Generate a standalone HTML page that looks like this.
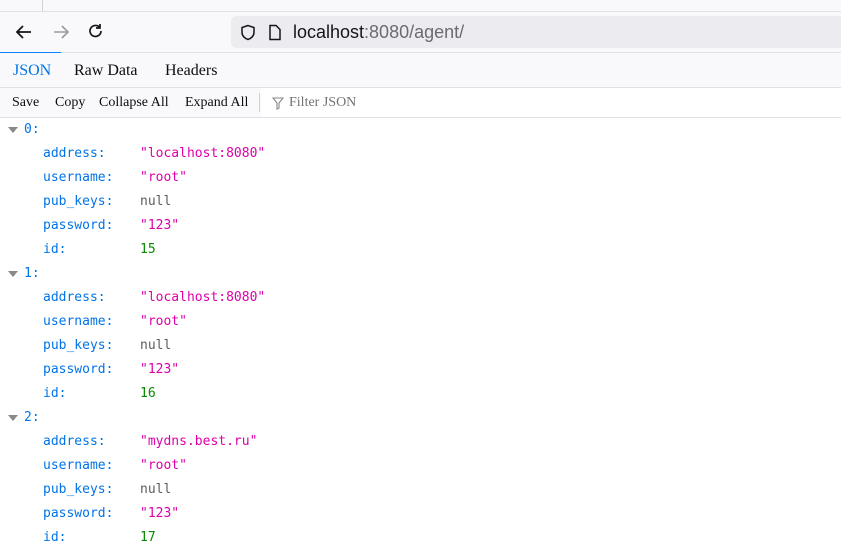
<!DOCTYPE html>
<html><head><style>
body{margin:0;width:841px;height:550px;overflow:hidden;background:#fff;font-family:"Liberation Serif",serif;position:relative}
.top{position:absolute;left:0;top:0;width:841px;height:11px;background:#f9f9fb;border-bottom:1px solid #e0e0e6}
.top i{position:absolute;left:42px;top:0;width:1px;height:11px;background:#d0d0d7}
.nav{position:absolute;top:12px;left:0;width:841px;height:40px;background:#f9f9fb;border-bottom:1px solid #e0e0e6}
.url{position:absolute;left:231px;top:4px;width:620px;height:32px;background:#ececf0;border-radius:5px}
.url span{position:absolute;left:62px;top:6px;font-family:"Liberation Sans",sans-serif;font-size:18px;color:#15141a}
.url span b{font-weight:normal;color:#6a6a72}
.tabs{position:absolute;top:53px;left:0;width:841px;height:34px;background:#f9f9fb;border-bottom:1px solid #e0e0e6;font-size:16px}
.tabs span{position:absolute;top:9px;color:#0c0c0d}
.bar{position:absolute;top:88px;left:0;width:841px;height:29px;background:#f9f9fb;border-bottom:1px solid #e0e0e6;font-size:14px;color:#0c0c0d}
.bar span{position:absolute;top:7px}
.filter{position:absolute;left:261px;top:0;width:580px;height:29px;background:#fff}
.j{position:absolute;left:0;top:118px;font-family:"DejaVu Sans Mono",monospace;font-size:13px}
.r{position:absolute;white-space:pre;height:24px;line-height:24px}
.k{color:#0074e8}.s{color:#dd00a9}.n{color:#058b00}.nl{color:#5c5c5f}
.tri{position:absolute;width:0;height:0;border-left:5px solid transparent;border-right:5px solid transparent;border-top:6px solid #888}
</style></head><body>
<div class="top"><i></i></div>
<div class="nav">
<svg style="position:absolute;left:14px;top:11px" width="20" height="18" viewBox="0 0 20 18"><path d="M17 9H3M9 3L3 9l6 6" stroke="#15141a" stroke-width="1.8" fill="none"/></svg>
<svg style="position:absolute;left:51px;top:11px" width="20" height="18" viewBox="0 0 20 18"><path d="M3 9h14M11 3l6 6-6 6" stroke="#9a9aa0" stroke-width="1.6" fill="none"/></svg>
<svg style="position:absolute;left:87px;top:10px" width="18" height="18" viewBox="0 0 18 18"><path d="M14 9a5.5 5.5 0 1 1-1.8-4.1M13 2v4h-4" stroke="#15141a" stroke-width="1.7" fill="none"/></svg>
<div class="url">
<svg style="position:absolute;left:9px;top:8px" width="16" height="17" viewBox="0 0 16 17"><path d="M8 1.5L2 3.5v5c0 3.5 3 6 6 7 3-1 6-3.5 6-7v-5z" stroke="#15141a" stroke-width="1.5" fill="none"/></svg>
<svg style="position:absolute;left:37px;top:8px" width="14" height="17" viewBox="0 0 14 17"><path d="M2 1.5h6l4 4v10H2z" stroke="#15141a" stroke-width="1.5" fill="none"/></svg>
<span>localhost<b>:8080/agent/</b></span></div>
</div>
<div style="position:absolute;left:0;top:52px;width:61px;height:2px;background:#0a84ff"></div>
<div class="tabs"><span style="left:13px;color:#0074e8">JSON</span><span style="left:74px">Raw Data</span><span style="left:165px">Headers</span></div>
<div class="bar"><span style="left:12px">Save</span><span style="left:55px">Copy</span><span style="left:99px">Collapse All</span><span style="left:185px">Expand All</span>
<div style="position:absolute;left:259px;top:5px;width:1px;height:19px;background:#d0d0d7"></div>
<div class="filter"><svg style="position:absolute;left:11px;top:9px" width="12" height="13" viewBox="0 0 12 13"><path d="M1 1h10L7 6v5l-2 1V6z" stroke="#888" stroke-width="1.1" fill="none"/></svg><span style="left:28px;color:#737373">Filter JSON</span></div></div>
<div class="j">
<div class="tri" style="left:8px;top:9px"></div><div class="r k" style="left:24px;top:0">0:</div>
<div class="r" style="left:43px;top:24px"><span class="k">address:</span></div><div class="r s" style="left:140px;top:24px">"localhost:8080"</div>
<div class="r" style="left:43px;top:48px"><span class="k">username:</span></div><div class="r s" style="left:140px;top:48px">"root"</div>
<div class="r" style="left:43px;top:72px"><span class="k">pub_keys:</span></div><div class="r nl" style="left:140px;top:72px">null</div>
<div class="r" style="left:43px;top:96px"><span class="k">password:</span></div><div class="r s" style="left:140px;top:96px">"123"</div>
<div class="r" style="left:43px;top:120px"><span class="k">id:</span></div><div class="r n" style="left:140px;top:120px">15</div>
<div class="tri" style="left:8px;top:153px"></div><div class="r k" style="left:24px;top:144px">1:</div>
<div class="r" style="left:43px;top:168px"><span class="k">address:</span></div><div class="r s" style="left:140px;top:168px">"localhost:8080"</div>
<div class="r" style="left:43px;top:192px"><span class="k">username:</span></div><div class="r s" style="left:140px;top:192px">"root"</div>
<div class="r" style="left:43px;top:216px"><span class="k">pub_keys:</span></div><div class="r nl" style="left:140px;top:216px">null</div>
<div class="r" style="left:43px;top:240px"><span class="k">password:</span></div><div class="r s" style="left:140px;top:240px">"123"</div>
<div class="r" style="left:43px;top:264px"><span class="k">id:</span></div><div class="r n" style="left:140px;top:264px">16</div>
<div class="tri" style="left:8px;top:297px"></div><div class="r k" style="left:24px;top:288px">2:</div>
<div class="r" style="left:43px;top:312px"><span class="k">address:</span></div><div class="r s" style="left:140px;top:312px">"mydns.best.ru"</div>
<div class="r" style="left:43px;top:336px"><span class="k">username:</span></div><div class="r s" style="left:140px;top:336px">"root"</div>
<div class="r" style="left:43px;top:360px"><span class="k">pub_keys:</span></div><div class="r nl" style="left:140px;top:360px">null</div>
<div class="r" style="left:43px;top:384px"><span class="k">password:</span></div><div class="r s" style="left:140px;top:384px">"123"</div>
<div class="r" style="left:43px;top:408px"><span class="k">id:</span></div><div class="r n" style="left:140px;top:408px">17</div>
</div>
</body></html>
